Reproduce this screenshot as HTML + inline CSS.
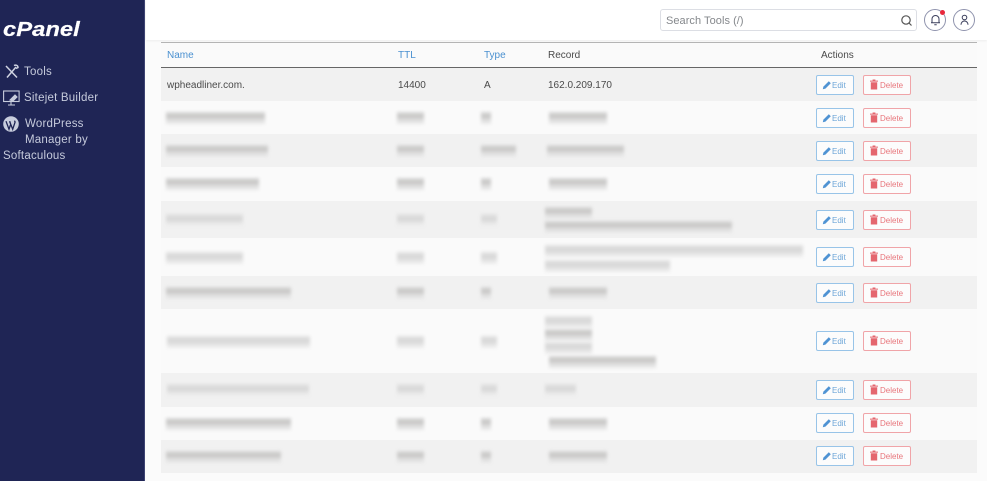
<!DOCTYPE html>
<html><head><meta charset="utf-8"><style>
*{box-sizing:border-box}
html,body{margin:0;padding:0}
body{width:987px;height:481px;overflow:hidden;background:#fbfbfb;position:relative;font-family:"Liberation Sans",sans-serif;color:#444}
.a{position:absolute}
.t{position:absolute;white-space:nowrap;line-height:14px}
#side{left:0;top:0;width:145px;height:481px;background:#1f2555;border-right:1px solid #3d4372}
.nav{color:#c6cbdc;font-size:11.5px;letter-spacing:.22px;filter:blur(.3px)}
.row{position:absolute;left:161px;width:816px}
.g{background:#f1f1f1}.w{background:#fafafa}
.b{position:absolute;height:12px;filter:blur(1.5px);background:linear-gradient(#dadada 0,#c6c5c4 40%,#dcdcdc 62%,#ebebeb 100%)}
.bl{background:linear-gradient(#e4e4e4 0,#d6d6d6 42%,#e4e4e4 68%,#efefef 100%)}
.e,.d{position:absolute;height:20px;border-radius:2px;background:#fcfcfc;font-size:8px;line-height:19px;filter:blur(.25px)}
.e{left:816px;width:38px;border:1px solid #98c4e8;color:#6ea6d8}
.d{left:863px;width:48px;border:1px solid #f0a4a8;color:#e8767c}
.e svg{position:absolute;left:5px;top:4px}.d svg{position:absolute;left:6px;top:3px}
.e span{position:absolute;left:15px;top:0}.d span{position:absolute;left:16px;top:0}
.h{font-size:10px;color:#4a90d0}
.c{font-size:10px;color:#4a4a4a;filter:blur(.2px)}
</style></head><body>
<div class="a" style="left:146px;top:0;width:841px;height:40px;background:#fff;box-shadow:0 1px 2px rgba(0,0,0,.06)"></div>
<div class="a" id="side"></div>
<div class="t" style="left:3px;top:18px;font-size:20px;line-height:24px;font-weight:bold;font-style:italic;color:#fff;letter-spacing:0;transform:scaleX(1.19);transform-origin:left;-webkit-text-stroke:.2px #fff;filter:blur(.2px)">cPanel</div>
<svg class="a" style="left:4px;top:64px" width="16" height="15" viewBox="0 0 16 15" fill="none" stroke="#d0d4e2" stroke-width="1.5"><path d="M3 13.5 12 3M2 2l11 11.5"/><path d="M10 1.5c2-1 4 0 4 2l-2 1"/></svg>
<div class="t nav" style="left:24px;top:65px">Tools</div>
<svg class="a" style="left:3px;top:90px" width="17" height="16" viewBox="0 0 17 16" fill="none" stroke="#c8cddd" stroke-width="1.1"><rect x=".6" y="1" width="15.5" height="10.5"/><path d="M5 15h7M8 11.5V15"/><path d="M7 10l5-5 2 2-4 4z" fill="#c8cddd"/></svg>
<div class="t nav" style="left:24px;top:91px">Sitejet Builder</div>
<svg class="a" style="left:3px;top:116px" width="16" height="16" viewBox="0 0 16 16"><circle cx="8" cy="8" r="7.8" fill="#c8cddd"/><path d="M3 5.2l3 8 1.7-5-1-3M6.5 5.2l3.2 8 2.2-6.5c.4-1-.1-1.6-.5-2" fill="none" stroke="#1f2555" stroke-width="1.3"/></svg>
<div class="t nav" style="left:25px;top:117px">WordPress</div>
<div class="t nav" style="left:25px;top:133px">Manager by</div>
<div class="t nav" style="left:3px;top:149px">Softaculous</div>

<div class="a" style="left:660px;top:9px;width:257px;height:22px;border:1px solid #dcdee4;border-radius:3px;background:#fff"></div>
<div class="t" style="left:666px;top:14px;font-size:11px;letter-spacing:.05px;color:#85888c">Search Tools (/)</div>
<svg class="a" style="left:900px;top:14px" width="13" height="13" viewBox="0 0 13 13" fill="none" stroke="#555" stroke-width="1.2"><circle cx="6" cy="6" r="4.2"/><path d="M9 9l2.5 2.5"/></svg>
<div class="a" style="left:924px;top:9px;width:22px;height:22px;border:1px solid #8f93ad;border-radius:50%;background:#fff"></div>
<svg class="a" style="left:930px;top:14px" width="11" height="12" viewBox="0 0 11 12" fill="none" stroke="#3b3f5c" stroke-width="1"><path d="M2 8.5V5a3.5 3.5 0 0 1 7 0v3.5M1 8.7h9M4.3 10.7h2.4"/></svg>
<div class="a" style="left:940px;top:10px;width:5px;height:5px;border-radius:50%;background:#e8283c"></div>
<div class="a" style="left:953px;top:9px;width:22px;height:22px;border:1px solid #8f93ad;border-radius:50%;background:#fff"></div>
<svg class="a" style="left:959px;top:14px" width="11" height="12" viewBox="0 0 11 12" fill="none" stroke="#3b3f5c" stroke-width="1"><circle cx="5.5" cy="3.5" r="2.3"/><path d="M2 10.8c0-5 7-5 7 0"/></svg>

<div class="a" style="left:161px;top:42px;width:816px;height:1px;background:#b4b4b4"></div>
<div class="row" style="top:43px;height:24px;background:#fafafa"></div>
<div class="t h" style="left:167px;top:49px">Name</div>
<div class="t h" style="left:398px;top:49px">TTL</div>
<div class="t h" style="left:484px;top:49px">Type</div>
<div class="t c" style="left:548px;top:49px">Record</div>
<div class="t c" style="left:821px;top:49px">Actions</div>
<div class="a" style="left:161px;top:67px;width:816px;height:1.5px;background:#666"></div>

<div class="row g" style="top:68px;height:33px"></div>
<div class="row w" style="top:101px;height:33px"></div>
<div class="row g" style="top:134px;height:33px"></div>
<div class="row w" style="top:167px;height:34px"></div>
<div class="row g" style="top:201px;height:37px"></div>
<div class="row w" style="top:238px;height:38px"></div>
<div class="row g" style="top:276px;height:33px"></div>
<div class="row w" style="top:309px;height:64px"></div>
<div class="row g" style="top:373px;height:34px"></div>
<div class="row w" style="top:407px;height:33px"></div>
<div class="row g" style="top:440px;height:33px"></div>

<div class="t c" style="left:167px;top:79px">wpheadliner.com.</div>
<div class="t c" style="left:398px;top:79px">14400</div>
<div class="t c" style="left:484px;top:79px">A</div>
<div class="t c" style="left:548px;top:79px">162.0.209.170</div>

<!-- blurred cells -->
<div class="b" style="left:166px;top:112px;width:99px"></div><div class="b" style="left:397px;top:112px;width:27px"></div><div class="b" style="left:481px;top:112px;width:10px"></div><div class="b" style="left:549px;top:112px;width:58px"></div>
<div class="b" style="left:166px;top:145px;width:102px"></div><div class="b" style="left:397px;top:145px;width:27px"></div><div class="b" style="left:481px;top:145px;width:35px"></div><div class="b" style="left:547px;top:145px;width:77px"></div>
<div class="b" style="left:166px;top:178px;width:93px"></div><div class="b" style="left:397px;top:178px;width:27px"></div><div class="b" style="left:481px;top:178px;width:10px"></div><div class="b" style="left:549px;top:178px;width:58px"></div>
<div class="b bl" style="left:166px;top:214px;width:77px"></div><div class="b bl" style="left:397px;top:214px;width:27px"></div><div class="b bl" style="left:481px;top:214px;width:16px"></div><div class="b" style="left:545px;top:207px;width:47px"></div><div class="b" style="left:545px;top:221px;width:187px"></div>
<div class="b bl" style="left:166px;top:252px;width:77px"></div><div class="b bl" style="left:397px;top:252px;width:27px"></div><div class="b bl" style="left:481px;top:252px;width:16px"></div><div class="b bl" style="left:545px;top:245px;width:258px"></div><div class="b bl" style="left:545px;top:260px;width:125px"></div>
<div class="b" style="left:166px;top:287px;width:125px"></div><div class="b" style="left:397px;top:287px;width:27px"></div><div class="b" style="left:481px;top:287px;width:10px"></div><div class="b" style="left:549px;top:287px;width:58px"></div>
<div class="b bl" style="left:167px;top:336px;width:143px"></div><div class="b bl" style="left:397px;top:336px;width:27px"></div><div class="b bl" style="left:481px;top:336px;width:16px"></div><div class="b bl" style="left:545px;top:316px;width:47px"></div><div class="b" style="left:545px;top:329px;width:47px"></div><div class="b bl" style="left:545px;top:342px;width:47px"></div><div class="b" style="left:549px;top:356px;width:107px"></div>
<div class="b bl" style="left:167px;top:384px;width:142px"></div><div class="b bl" style="left:397px;top:384px;width:27px"></div><div class="b bl" style="left:481px;top:384px;width:16px"></div><div class="b bl" style="left:545px;top:384px;width:31px"></div>
<div class="b" style="left:166px;top:418px;width:125px"></div><div class="b" style="left:397px;top:418px;width:27px"></div><div class="b" style="left:481px;top:418px;width:10px"></div><div class="b" style="left:549px;top:418px;width:58px"></div>
<div class="b" style="left:166px;top:451px;width:115px"></div><div class="b" style="left:397px;top:451px;width:27px"></div><div class="b" style="left:481px;top:451px;width:10px"></div><div class="b" style="left:549px;top:451px;width:58px"></div>

<svg width="0" height="0" style="position:absolute"><defs>
<symbol id="p" viewBox="0 0 10 10"><path d="M.8 9.2l.6-2.6L6.8 1.2l2 2-5.4 5.4z" fill="#4f93d3"/></symbol>
<symbol id="r" viewBox="0 0 8 11"><path d="M0 1.6h8v1H0zM2.6 1.6V.5h2.8v1.1zM.8 3.2h6.4v7.3H.8z" fill="#e4666e"/></symbol>
</defs></svg>

<div class="e" style="top:75px"><svg width="10" height="10"><use href="#p"/></svg><span>Edit</span></div><div class="d" style="top:75px"><svg width="8" height="11"><use href="#r"/></svg><span>Delete</span></div>
<div class="e" style="top:108px"><svg width="10" height="10"><use href="#p"/></svg><span>Edit</span></div><div class="d" style="top:108px"><svg width="8" height="11"><use href="#r"/></svg><span>Delete</span></div>
<div class="e" style="top:141px"><svg width="10" height="10"><use href="#p"/></svg><span>Edit</span></div><div class="d" style="top:141px"><svg width="8" height="11"><use href="#r"/></svg><span>Delete</span></div>
<div class="e" style="top:174px"><svg width="10" height="10"><use href="#p"/></svg><span>Edit</span></div><div class="d" style="top:174px"><svg width="8" height="11"><use href="#r"/></svg><span>Delete</span></div>
<div class="e" style="top:210px"><svg width="10" height="10"><use href="#p"/></svg><span>Edit</span></div><div class="d" style="top:210px"><svg width="8" height="11"><use href="#r"/></svg><span>Delete</span></div>
<div class="e" style="top:247px"><svg width="10" height="10"><use href="#p"/></svg><span>Edit</span></div><div class="d" style="top:247px"><svg width="8" height="11"><use href="#r"/></svg><span>Delete</span></div>
<div class="e" style="top:283px"><svg width="10" height="10"><use href="#p"/></svg><span>Edit</span></div><div class="d" style="top:283px"><svg width="8" height="11"><use href="#r"/></svg><span>Delete</span></div>
<div class="e" style="top:331px"><svg width="10" height="10"><use href="#p"/></svg><span>Edit</span></div><div class="d" style="top:331px"><svg width="8" height="11"><use href="#r"/></svg><span>Delete</span></div>
<div class="e" style="top:380px"><svg width="10" height="10"><use href="#p"/></svg><span>Edit</span></div><div class="d" style="top:380px"><svg width="8" height="11"><use href="#r"/></svg><span>Delete</span></div>
<div class="e" style="top:413px"><svg width="10" height="10"><use href="#p"/></svg><span>Edit</span></div><div class="d" style="top:413px"><svg width="8" height="11"><use href="#r"/></svg><span>Delete</span></div>
<div class="e" style="top:446px"><svg width="10" height="10"><use href="#p"/></svg><span>Edit</span></div><div class="d" style="top:446px"><svg width="8" height="11"><use href="#r"/></svg><span>Delete</span></div>
</body></html>
